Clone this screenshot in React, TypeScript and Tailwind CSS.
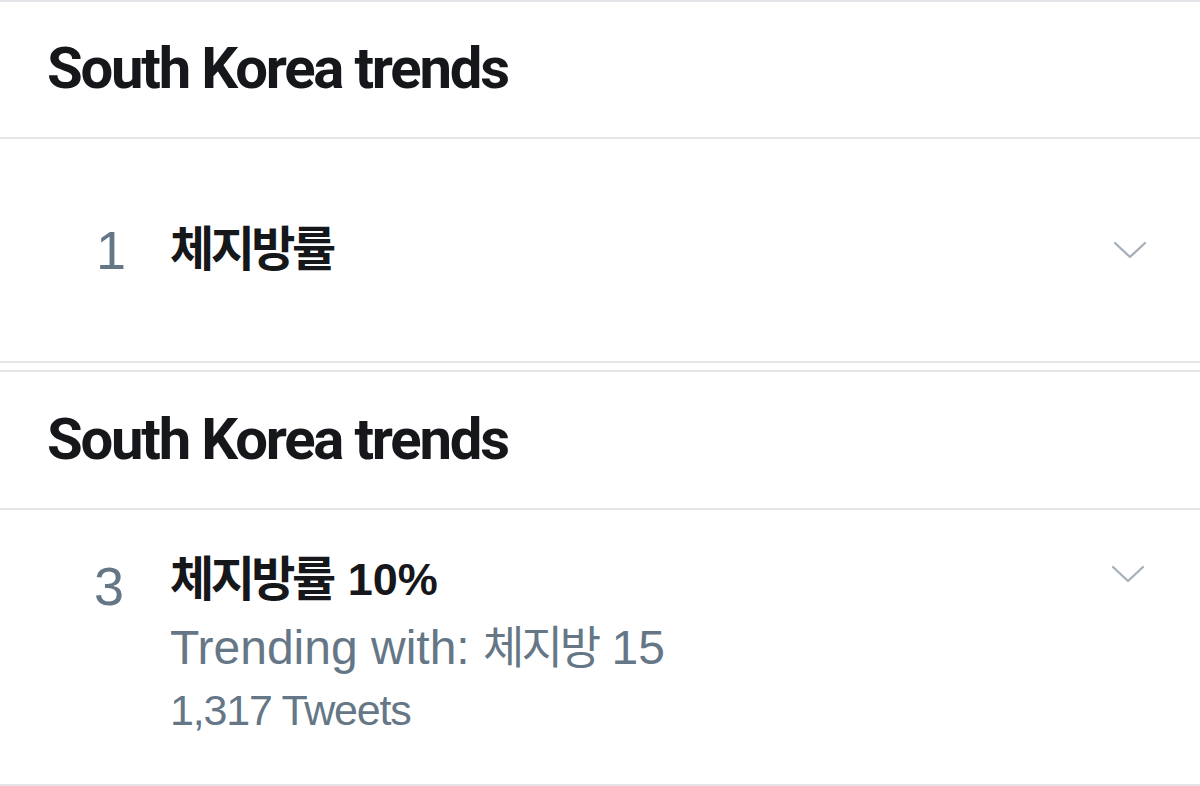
import React from 'react';

const sans = { fontFamily: '"Liberation Sans", "Noto Sans CJK KR", sans-serif' };
const heading = { fontFamily: 'Roboto, "Liberation Sans", sans-serif' };

function Chevron() {
  return (
    <svg width="34" height="20" viewBox="0 0 34 20" fill="none" className="shrink-0">
      <polyline
        points="2,3 17,17 32,3"
        stroke="#a7b0b9"
        strokeWidth="2.3"
        strokeLinecap="round"
        strokeLinejoin="round"
      />
    </svg>
  );
}

function SectionHeader({ title, height }: { title: string; height: string }) {
  return (
    <div className={`${height} flex items-center pl-[47px] pb-[3px] border-b-2 border-[#e4e4e9]`}>
      <h2 className="text-[58px] leading-none font-bold tracking-[-2.2px] text-[#15171b]" style={heading}>
        {title}
      </h2>
    </div>
  );
}

export default function App() {
  return (
    <div className="w-[1200px] h-[786px] bg-white overflow-hidden text-[#15171b]" style={sans}>
      <div className="border-t-2 border-[#e4e4e9]">
        <SectionHeader title="South Korea trends" height="h-[137px]" />
        {/* trend 1 */}
        <div className="h-[224px] flex items-center pr-[53px] border-b-2 border-[#e4e4e9]">
          <div className="w-[170px] pl-[96px] text-[54px] leading-[56px] text-[#657786]">1</div>
          <div className="flex-1 text-[48px] leading-[56px] font-semibold tracking-[-3.5px]">체지방률</div>
          <Chevron />
        </div>
      </div>

      <div className="h-[7px]" />

      <div className="border-t-2 border-[#e4e4e9]">
        <SectionHeader title="South Korea trends" height="h-[138px]" />
        {/* trend 3 */}
        <div className="h-[276px] flex items-start pt-[42px] pr-[55px] border-b-2 border-[#e4e4e9]">
          <div className="w-[170px] pl-[94px] pt-[6px] text-[54px] leading-[56px] text-[#657786]">3</div>
          <div className="flex-1 flex flex-col">
            <div className="h-[56px] flex items-center text-[48px] leading-[56px] font-semibold">
              <span className="tracking-[-3.5px]">체지방률</span>
              <span className="ml-[15px] text-[45px] font-bold">10%</span>
            </div>
            <div className="mt-[10px] text-[48px] leading-[60px] text-[#657786]">
              Trending with: <span className="text-[45px] tracking-[-3px]">체지방</span> 15
            </div>
            <div className="mt-[6px] text-[43px] leading-[50px] tracking-[-1.2px] text-[#657786]">
              1,317 Tweets
            </div>
          </div>
          <div className="pt-[12px]">
            <Chevron />
          </div>
        </div>
      </div>
    </div>
  );
}
